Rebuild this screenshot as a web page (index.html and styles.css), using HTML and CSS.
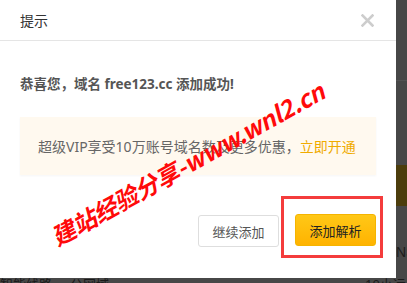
FILE: index.html
```html
<!DOCTYPE html>
<html lang="zh-CN">
<head>
<meta charset="utf-8">
<link rel="stylesheet" href="styles.css">
</head>
<body>
<div class="page">
  <div class="dialog">
    <div class="dlg-head">
      <span class="dlg-title">提示</span>
      <svg class="dlg-close" width="13" height="13" viewBox="0 0 13 13"><path d="M1.5 1.5 L11.5 11.5 M11.5 1.5 L1.5 11.5" stroke="#cdcdcd" stroke-width="2.6" stroke-linecap="square"/></svg>
    </div>
    <div class="dlg-body">
      <p class="msg">恭喜您，域名 free123.cc 添加成功!</p>
      <div class="promo">超级VIP享受10万账号域名数及更多优惠，<a class="promo-link">立即开通</a></div>
      <div class="actions">
        <button class="btn btn-default">继续添加</button>
        <button class="btn btn-primary">添加解析</button>
      </div>
    </div>
    <div class="mark-box"></div>
    <div class="watermark">建站经验分享-www.wnl2.cn</div>
  </div>
  <div class="side">
    <div class="side-top"></div>
    <div class="side-olive"></div>
    <div class="side-ns">NS</div>
  </div>
</div>
<div class="bottom-strip"><span class="bs-a">智能线路</span><span class="bs-b">公网域</span><span class="bs-c">10小运</span></div>
</body>
</html>
```
FILE: styles.css
```css
html, body {
  margin: 0;
  padding: 0;
}
body {
  width: 407px;
  height: 283px;
  overflow: hidden;
  background: #474747;
  font-family: "Noto Sans", "Noto Sans CJK SC", sans-serif;
}
.page {
  display: flex;
  height: 278px;
}
.dialog {
  position: relative;
  width: 396px;
  height: 278px;
  background: #fff;
  flex: none;
  overflow: hidden;
}
.dlg-head {
  height: 40px;
  border-bottom: 1px solid #e5e5e5;
  display: flex;
  align-items: center;
  justify-content: space-between;
  padding: 0 22px 0 20px;
}
.dlg-title {
  font-size: 14px;
  color: #333;
  line-height: 20px;
  margin-top: 1px;
}
.dlg-close {
  display: block;
  margin-top: 1px;
}
.dlg-body {
  padding: 33px 20px 0 20px;
}
.msg {
  margin: 0;
  font-size: 13.5px;
  font-weight: bold;
  color: #555;
  line-height: 20px;
}
.promo {
  margin-top: 23px;
  height: 58px;
  background: #fff9ef;
  box-shadow: 0 1px 2px rgba(0,0,0,0.04);
  display: flex;
  align-items: center;
  padding-left: 18px;
  font-size: 14px;
  color: #666;
}
.promo-link {
  color: #f0ab00;
}
.actions {
  margin-top: 40px;
  display: flex;
  justify-content: flex-end;
  gap: 16px;
}
.btn {
  width: 81px;
  height: 32px;
  border-radius: 3px;
  font-family: "Noto Sans CJK SC", sans-serif;
  font-size: 13px;
  padding: 0;
}
.btn-default {
  background: #fff;
  border: 1px solid #dedede;
  color: #555;
}
.btn-primary {
  background: linear-gradient(#ffc817, #ffb300);
  border: 1px solid #f5b400;
  color: #222;
  margin-top: -1px;
}
.mark-box {
  position: absolute;
  left: 281px;
  top: 196px;
  width: 96px;
  height: 56px;
  border: 3px solid #f43c3c;
}
.watermark {
  position: absolute;
  left: 187px;
  top: 163px;
  transform: translate(-50%, -50%) rotate(-29deg);
  white-space: nowrap;
  color: #ff0a0a;
  font-size: 24px;
  font-weight: bold;
  font-style: italic;
  font-family: "Noto Sans CJK SC", sans-serif;
  letter-spacing: -0.3px;
}
.side {
  flex: 1;
  display: flex;
  flex-direction: column;
}
.side-top {
  height: 80px;
  border-bottom: 1px solid #525252;
}
.side-olive {
  margin-top: 84px;
  height: 41px;
  background: #4c3d0c;
}
.side-ns {
  margin-top: 38px;
  font-size: 14px;
  color: #1c1c1c;
  font-family: "Liberation Sans", sans-serif;
}
.bottom-strip {
  height: 5px;
  overflow: hidden;
  position: relative;
  font-size: 13px;
  color: #1a1a1a;
  line-height: 12px;
}
.bs-a { position: absolute; left: 0; top: 0; }
.bs-b { position: absolute; left: 70px; top: 0; }
.bs-c { position: absolute; left: 365px; top: 0; }
```
